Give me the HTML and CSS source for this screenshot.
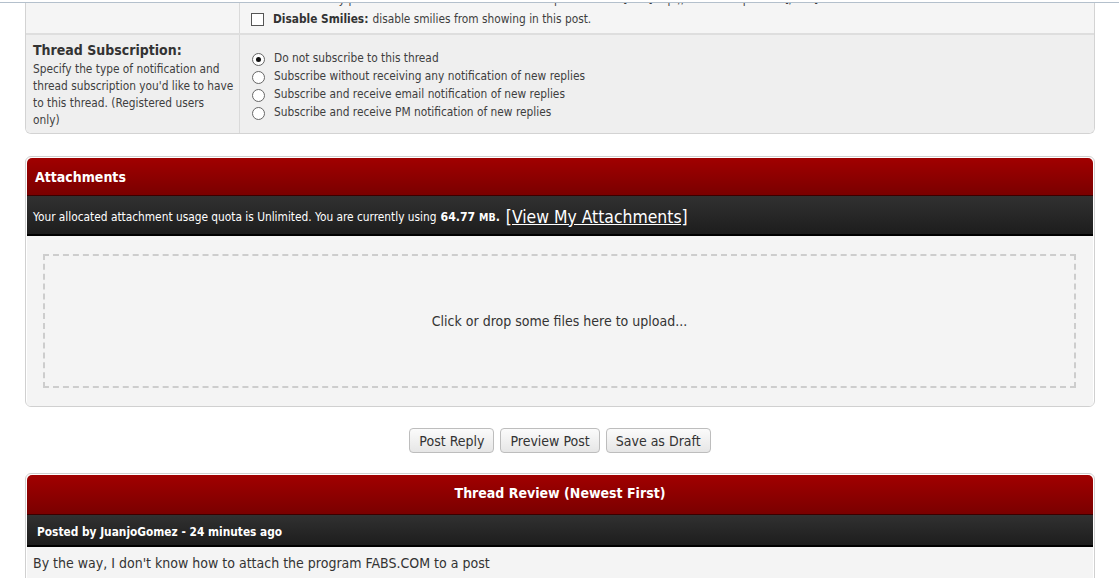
FILE: index.html
```html
<!DOCTYPE html>
<html>

	<head>
		<meta charset="UTF-8">
		<title>Reply to Thread</title>
		<link rel="stylesheet" href="styles.css">
	</head>

	<body>
		<div class="topline"></div>
		<div class="page">

			<!-- options, scrolled partly out of view -->
			<div class="formbox">
				<div class="row row_first">
					<div class="label_col"></div>
					<div class="field_col">
						<div class="clipped">Automatically parse links in text: will turn www.example.com into [URL]http://www.example.com[/URL].</div>
						<div class="check_line">
							<span class="checkbox"></span>
							<b>Disable Smilies:</b> disable smilies from showing in this post.
						</div>
					</div>
				</div>
				<div class="row row_sub">
					<div class="label_col">
						<div class="label_title">Thread Subscription:</div>
						<div class="label_desc">Specify the type of notification and thread subscription you'd like to have to this thread. (Registered users only)</div>
					</div>
					<div class="field_col radios">
						<div class="radio_line"><span class="radio on"></span>Do not subscribe to this thread</div>
						<div class="radio_line"><span class="radio"></span>Subscribe without receiving any notification of new replies</div>
						<div class="radio_line"><span class="radio"></span>Subscribe and receive email notification of new replies</div>
						<div class="radio_line"><span class="radio"></span>Subscribe and receive PM notification of new replies</div>
					</div>
				</div>
			</div>

			<!-- attachments -->
			<div class="block">
				<div class="block_head">Attachments</div>
				<div class="block_sub">Your allocated attachment usage quota is Unlimited. You are currently using <b>64.77 <span class="unit">MB</span>.</b> <a class="view_link" href="#">[View My Attachments]</a></div>
				<div class="block_body">
					<div class="dropzone">Click or drop some files here to upload...</div>
				</div>
			</div>

			<div class="buttons">
				<button class="btn">Post Reply</button>
				<button class="btn">Preview Post</button>
				<button class="btn">Save as Draft</button>
			</div>

			<!-- thread review -->
			<div class="block review">
				<div class="block_head center">Thread Review (Newest First)</div>
				<div class="block_sub"><b>Posted by JuanjoGomez - 24 minutes ago</b></div>
				<div class="post_text">By the way, I don't know how to attach the program FABS.COM to a post</div>
			</div>

		</div>
	</body>

</html>
```

FILE: styles.css
```css
body {
	margin: 0;
	background-color: #fff;
	font-family: "DejaVu Sans Condensed", "DejaVu Sans", sans-serif;
	color: #3e3e3e;
	overflow: hidden;
}

.topline {
	height: 2px;
	border-bottom: 1px solid #b4c0cc;
	position: relative;
	z-index: 2;
	background: #fff;
}

.page {
	padding: 0 24px 0 25px;
}

/* option rows */
.formbox {
	border: 1px solid #d3d3d3;
	border-top: none;
	border-radius: 0 0 6px 6px;
	overflow: hidden;
}

.row {
	display: flex;
}

.label_col {
	width: 201px;
	padding: 0 5px 0 7px;
	border-right: 1px solid #dadada;
	flex-shrink: 0;
}

.field_col {
	flex: 1;
	padding-left: 10px;
}

.row_first {
	background: #f5f5f5;
	height: 30px;
	border-bottom: 2px solid #dedede;
	overflow: hidden;
	font-size: 11.8px;
}

.clipped {
	margin-top: -13px;
	height: 18px;
	line-height: 18px;
	padding-left: 22px;
}

.check_line {
	display: flex;
	align-items: center;
	line-height: 16px;
	margin-top: 3px;
}

.check_line b {
	margin-right: 4px;
	color: #333;
}

.checkbox {
	width: 11px;
	height: 11px;
	border: 1px solid #555;
	background: #fff;
	margin: 0 9px 0 1px;
}

.row_sub {
	background: #efefef;
	height: 98px;
}

.label_title {
	font-weight: bold;
	font-size: 14px;
	color: #333;
	margin-top: 7px;
	line-height: 17px;
}

.label_desc {
	font-size: 11.8px;
	line-height: 17px;
	margin-top: 2px;
}

.radios {
	padding-top: 14px;
	font-size: 11.8px;
}

.radio_line {
	display: flex;
	align-items: center;
	height: 18px;
}

.radio {
	width: 11px;
	height: 11px;
	border: 1px solid #666;
	border-radius: 50%;
	background: #fff;
	margin: 3px 9px 0 2px;
	position: relative;
}

.radio.on::after {
	content: "";
	position: absolute;
	left: 3px;
	top: 3px;
	width: 5px;
	height: 5px;
	border-radius: 50%;
	background: #111;
}

/* red blocks */
.block {
	margin-top: 22px;
	border: 1px solid #d0d0d0;
	border-radius: 6px;
	padding: 1px 1px 0 1px;
	background: #fff;
	overflow: hidden;
}

.block_head {
	height: 35px;
	line-height: 35px;
	padding: 2px 0 0 8px;
	color: #fff;
	font-weight: bold;
	font-size: 14px;
	border-radius: 5px 5px 0 0;
	background: linear-gradient(#a10000, #7a0000);
	border-bottom: 1px solid #3a0000;
}

.block_head.center {
	text-align: center;
	padding-left: 0;
}

.block_sub {
	height: 35px;
	display: flex;
	align-items: center;
	padding: 3px 0 0 6px;
	color: #fff;
	font-size: 11.8px;
	background: linear-gradient(#313131, #1d1d1d);
	border-bottom: 2px solid #000;
}

.block_sub b {
	margin-left: 4px;
	font-size: 12.2px;
}

.unit {
	font-size: 10.5px;
}

.view_link {
	color: #fff;
	font-size: 17.4px;
	margin-left: 6px;
}

.block_body {
	background: #f4f4f4;
	padding: 18px 17px 18px 16px;
}

.dropzone {
	height: 130px;
	border: 2px dashed #cdcdcd;
	display: flex;
	align-items: center;
	justify-content: center;
	font-size: 14px;
	color: #333;
}

/* buttons */
.buttons {
	display: flex;
	justify-content: center;
	gap: 6px;
	margin-top: 21px;
}

.btn {
	font-family: "DejaVu Sans Condensed", "DejaVu Sans", sans-serif;
	font-size: 14px;
	color: #333;
	height: 25px;
	padding: 0 9px;
	border: 1px solid #bdbdbd;
	border-radius: 4px;
	background: linear-gradient(#fbfbfb, #e6e6e6);
}

.review {
	margin-top: 20px;
}

.review .block_head {
	height: 39px;
	line-height: 37px;
	padding-top: 0;
}

.review .block_sub {
	height: 27px;
}

.review .block_sub b {
	font-size: 11.8px;
}

.post_text {
	background: #f4f4f4;
	padding: 8px 6px 20px;
	font-size: 14px;
	color: #333;
}
```
